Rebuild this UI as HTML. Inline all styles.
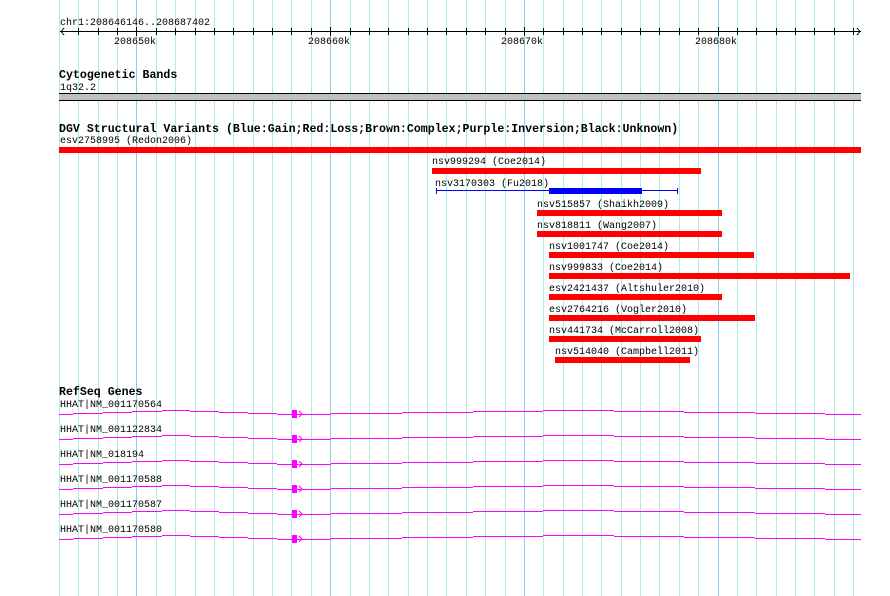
<!DOCTYPE html>
<html><head><meta charset="utf-8"><style>
html,body{margin:0;padding:0;background:#fff;}
svg{display:block}
text{font-family:"Liberation Mono",monospace;font-size:10px;fill:#000}
.b{font-weight:bold;font-size:11.6px}
</style></head><body>
<svg width="890" height="596" viewBox="0 0 890 596" xmlns="http://www.w3.org/2000/svg" shape-rendering="crispEdges">
<defs>
<g id="gene">
<path fill="none" stroke="#f0f" stroke-width="1" d="M59,414.5H73 M73,413.5H103 M103,412.5H132 M132,411.5H162 M162,410.5H190 M190,411.5H219 M219,412.5H248 M248,413.5H277 M277,414.5H292 M297,414.5H331 M331,413.5H402 M402,412.5H473 M473,411.5H543 M543,410.5H614 M614,411.5H684 M684,412.5H755 M755,413.5H825 M825,414.5H861"/>
<rect x="292" y="410" width="5" height="8" fill="#f0f"/>
<polyline points="299,411 302,414 299,417" fill="none" stroke="#f0f" stroke-width="1"/>
</g>
</defs>
<rect width="890" height="596" fill="#fff"/>
<path stroke="#aee9ef" stroke-width="1" fill="none" d="M59.5,0V596 M78.5,0V596 M98.5,0V596 M117.5,0V596 M156.5,0V596 M175.5,0V596 M195.5,0V596 M214.5,0V596 M233.5,0V596 M253.5,0V596 M272.5,0V596 M291.5,0V596 M311.5,0V596 M350.5,0V596 M369.5,0V596 M388.5,0V596 M408.5,0V596 M427.5,0V596 M446.5,0V596 M466.5,0V596 M485.5,0V596 M505.5,0V596 M543.5,0V596 M563.5,0V596 M582.5,0V596 M601.5,0V596 M621.5,0V596 M640.5,0V596 M659.5,0V596 M679.5,0V596 M698.5,0V596 M737.5,0V596 M756.5,0V596 M776.5,0V596 M795.5,0V596 M814.5,0V596 M834.5,0V596 M853.5,0V596"/>
<path stroke="#8ccbe6" stroke-width="1" fill="none" d="M136.5,0V596 M330.5,0V596 M524.5,0V596 M718.5,0V596"/>
<!-- ruler -->
<path stroke="#000" stroke-width="1" fill="none" d="M78.5,28V35 M98.5,28V35 M117.5,28V35 M156.5,28V35 M175.5,28V35 M195.5,28V35 M214.5,28V35 M233.5,28V35 M253.5,28V35 M272.5,28V35 M291.5,28V35 M311.5,28V35 M350.5,28V35 M369.5,28V35 M388.5,28V35 M408.5,28V35 M427.5,28V35 M446.5,28V35 M466.5,28V35 M485.5,28V35 M505.5,28V35 M543.5,28V35 M563.5,28V35 M582.5,28V35 M601.5,28V35 M621.5,28V35 M640.5,28V35 M659.5,28V35 M679.5,28V35 M698.5,28V35 M737.5,28V35 M756.5,28V35 M776.5,28V35 M795.5,28V35 M814.5,28V35 M834.5,28V35 M853.5,28V35 M136.5,27V36 M330.5,27V36 M524.5,27V36 M718.5,27V36"/>
<line x1="60" y1="31.5" x2="861" y2="31.5" stroke="#000"/>
<polyline points="64,28 61,31.5 64,35" fill="none" stroke="#000"/>
<polyline points="857,28 860,31.5 857,35" fill="none" stroke="#000"/>
<text x="60" y="25">chr1:208646146..208687402</text>
<text x="114" y="44">208650k</text>
<text x="308" y="44">208660k</text>
<text x="501" y="44">208670k</text>
<text x="695" y="44">208680k</text>
<!-- cyto -->
<text class="b" x="59" y="78">Cytogenetic Bands</text>
<text x="60" y="90">1q32.2</text>
<rect x="59" y="93" width="802" height="8" fill="#c0c0c0"/>
<rect x="59" y="93" width="802" height="1" fill="#000"/>
<rect x="59" y="100" width="802" height="1" fill="#000"/>
<!-- DGV -->
<text class="b" x="59" y="132">DGV Structural Variants (Blue:Gain;Red:Loss;Brown:Complex;Purple:Inversion;Black:Unknown)</text>
<text x="60" y="143">esv2758995 (Redon2006)</text>
<rect x="59" y="147" width="802" height="6" fill="#f00"/>
<text x="432" y="164">nsv999294 (Coe2014)</text>
<rect x="432" y="168" width="269" height="6" fill="#f00"/>
<text x="435" y="186">nsv3170303 (Fu2018)</text>
<rect x="436" y="190" width="242" height="1" fill="#00f"/>
<rect x="436" y="188" width="1" height="6" fill="#00f"/>
<rect x="677" y="188" width="1" height="6" fill="#00f"/>
<rect x="549" y="188" width="93" height="6" fill="#00f"/>
<text x="537" y="207">nsv515857 (Shaikh2009)</text>
<rect x="537" y="210" width="185" height="6" fill="#f00"/>
<text x="537" y="228">nsv818811 (Wang2007)</text>
<rect x="537" y="231" width="185" height="6" fill="#f00"/>
<text x="549" y="249">nsv1001747 (Coe2014)</text>
<rect x="549" y="252" width="205" height="6" fill="#f00"/>
<text x="549" y="270">nsv999833 (Coe2014)</text>
<rect x="549" y="273" width="301" height="6" fill="#f00"/>
<text x="549" y="291">esv2421437 (Altshuler2010)</text>
<rect x="549" y="294" width="173" height="6" fill="#f00"/>
<text x="549" y="312">esv2764216 (Vogler2010)</text>
<rect x="549" y="315" width="206" height="6" fill="#f00"/>
<text x="549" y="333">nsv441734 (McCarroll2008)</text>
<rect x="549" y="336" width="152" height="6" fill="#f00"/>
<text x="555" y="354">nsv514040 (Campbell2011)</text>
<rect x="555" y="357" width="135" height="6" fill="#f00"/>
<!-- genes -->
<text class="b" x="59" y="395">RefSeq Genes</text>
<text x="60" y="407">HHAT|NM_001170564</text>
<use href="#gene"/>
<text x="60" y="432">HHAT|NM_001122834</text>
<use href="#gene" transform="translate(0,25)"/>
<text x="60" y="457">HHAT|NM_018194</text>
<use href="#gene" transform="translate(0,50)"/>
<text x="60" y="482">HHAT|NM_001170588</text>
<use href="#gene" transform="translate(0,75)"/>
<text x="60" y="507">HHAT|NM_001170587</text>
<use href="#gene" transform="translate(0,100)"/>
<text x="60" y="532">HHAT|NM_001170580</text>
<use href="#gene" transform="translate(0,125)"/>
</svg>
</body></html>
